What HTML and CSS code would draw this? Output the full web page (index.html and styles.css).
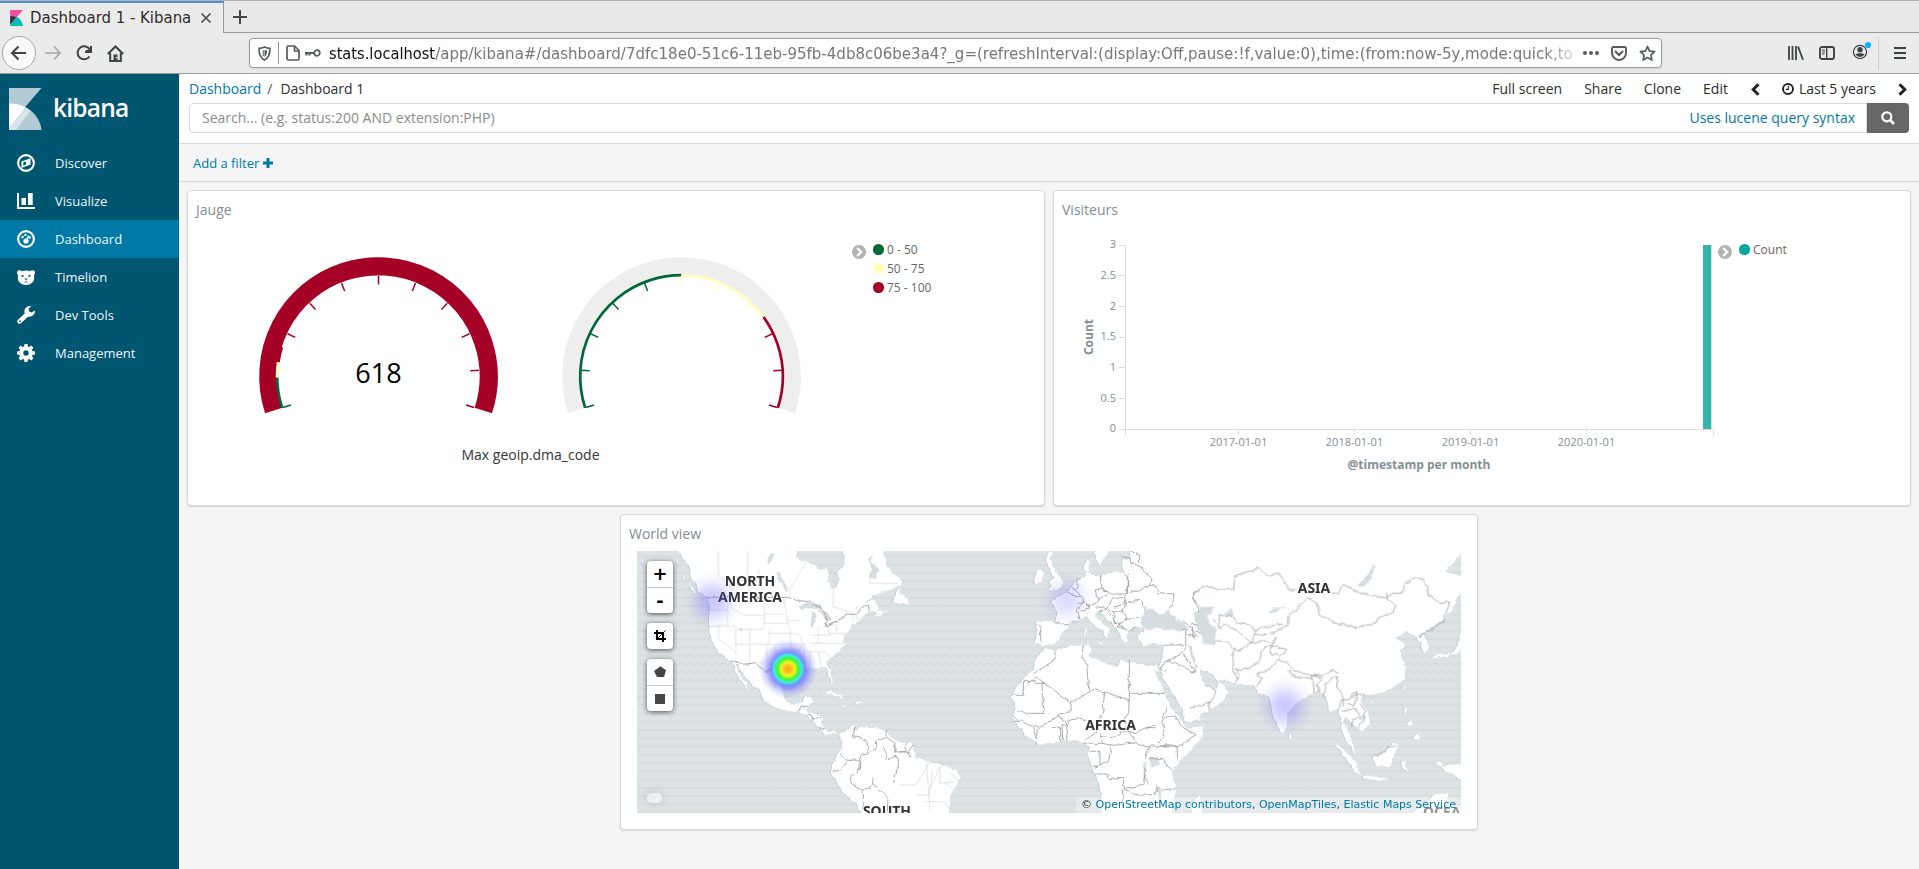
FILE: index.html
```html
<!DOCTYPE html>
<html lang="en">
<head>
<meta charset="utf-8">
<title>Dashboard 1 - Kibana</title>
<link rel="stylesheet" href="styles.css">
</head>
<body>
<div class="tabstrip">
  <div class="tab">
    <svg class="favicon" width="13" height="16" viewBox="0 0 32 40"><path fill="#f04e98" d="M0 0h32L0 37z"/><path fill="#343741" d="M0 15v22l16-19C11 16 5 15 0 15z"/><path fill="#00bfb3" d="M17 17L0 37v3h32c-1-10-7-18-15-23z"/></svg>
    <span class="tab-title">Dashboard 1 - Kibana</span>
    <svg class="tab-close" width="12" height="12" viewBox="0 0 12 12"><path d="M1.500 1.500l9 9m0-9l-9 9" stroke="#4a4f52" stroke-width="1.700"/></svg>
  </div>
  <svg class="newtab" width="16" height="16" viewBox="0 0 16 16"><path d="M8 1v14M1 8h14" stroke="#3f4447" stroke-width="2"/></svg>
</div>
<div class="toolbar">
  <div class="back"><svg width="18" height="16" viewBox="0 0 18 16"><path d="M8.500 1.500L2 8l6.500 6.500M2 8h14" fill="none" stroke="#3e4346" stroke-width="2"/></svg></div>
  <svg class="forward" width="18" height="16" viewBox="0 0 18 16"><path d="M10 1.500L16 8l-6 6.500M16 8H1" fill="none" stroke="#a5a7a8" stroke-width="1.700"/></svg>
  <svg class="reload" width="16" height="16" viewBox="0 0 16 16"><path d="M14 5A6.500 6.500 0 1 0 13.500 11.500" fill="none" stroke="#3e4346" stroke-width="2"/><path d="M15 1v6H9M14.500 6L10 6" fill="none" stroke="#3e4346" stroke-width="2"/></svg>
  <svg class="home" width="17" height="17" viewBox="0 0 17 17"><path d="M.8 9L8.500 1.500 16.200 9M3.200 8v8h10.600V8" fill="none" stroke="#3e4346" stroke-width="2"/><path d="M6.500 9.500h4V16h-4z" fill="#3e4346"/><circle cx="9.400" cy="12.700" r=".8" fill="#ebebeb"/></svg>
  <div class="urlbar">
    <svg class="shield" width="13" height="15" viewBox="0 0 13 15"><path d="M6.500 1c2 1 3.500 1.300 5.500 1.300C12 8 11 12 6.500 14 2 12 1 8 1 2.300 3 2.300 4.500 2 6.500 1z" fill="none" stroke="#555a5d" stroke-width="1.700"/><path d="M6.500 4v7C8.500 9.500 9 7 9 4.500z" fill="#555a5d"/><path d="M5.300 4.200v6" stroke="#555a5d"/></svg>
    <span class="url-sep"></span>
    <svg class="page-icon" width="14" height="16" viewBox="0 0 14 16"><path d="M2.500 1h6L13 5.500v8a1.500 1.500 0 0 1-1.500 1.500h-9A1.500 1.500 0 0 1 1 13.500v-11A1.500 1.500 0 0 1 2.500 1zM8.500 1v5H13" fill="none" stroke="#555a5d" stroke-width="1.700"/></svg>
    <svg class="key-icon" width="16" height="8" viewBox="0 0 16 8"><path d="M0 4h9M1.500 4v2.500M4.500 4v2.500" stroke="#555a5d" stroke-width="2"/><circle cx="12" cy="4" r="2.800" fill="none" stroke="#555a5d" stroke-width="1.700"/></svg>
    <div class="url"><span class="host">stats.localhost</span>/app/kibana#/dashboard/7dfc18e0-51c6-11eb-95fb-4db8c06be3a4?_g=(refreshInterval:(display:Off,pause:!f,value:0),time:(from:now-5y,mode:quick,to</div>
    <svg class="dots" width="16" height="4" viewBox="0 0 16 4"><g fill="#555a5d"><circle cx="2" cy="2" r="2"/><circle cx="8" cy="2" r="2"/><circle cx="14" cy="2" r="2"/></g></svg>
    <svg class="pocket" width="16" height="15" viewBox="0 0 16 15"><path d="M2.500 1h11A1.500 1.500 0 0 1 15 2.500V7A7 7 0 0 1 1 7V2.500A1.500 1.500 0 0 1 2.500 1z" fill="none" stroke="#555a5d" stroke-width="1.900"/><path d="M4.500 5.500L8 9l3.500-3.500" fill="none" stroke="#555a5d" stroke-width="2" stroke-linecap="round"/></svg>
    <svg class="star" width="17" height="17" viewBox="0 0 17 17"><path d="M8.500 1.500l2.100 4.600 5 .6-3.700 3.400 1 5-4.400-2.500-4.400 2.500 1-5L1.400 6.700l5-.6z" fill="none" stroke="#555a5d" stroke-width="1.700" stroke-linejoin="round"/></svg>
  </div>
  <div class="tools">
    <svg width="16" height="14" viewBox="0 0 16 14"><path d="M1 0v14M4.500 0v14M8 0v14M10 .5L15 13.800" stroke="#3e4346" stroke-width="1.800"/></svg>
    <svg width="16" height="14" viewBox="0 0 16 14"><rect x="1" y="1" width="14" height="12" rx="2" fill="none" stroke="#3e4346" stroke-width="1.900"/><path d="M7.700 1v12" stroke="#3e4346" stroke-width="1.400"/><path d="M3 4h3M3 6h3M3 8h2.500" stroke="#3e4346"/></svg>
    <svg class="account" width="20" height="20" viewBox="0 0 20 20"><circle cx="8" cy="11" r="6.600" fill="none" stroke="#3e4346" stroke-width="1.200"/><circle cx="8" cy="8.800" r="2.700" fill="#3e4346"/><path d="M3.500 13.500c2-1.800 7-1.800 9 0A5.500 5.500 0 0 1 8 16a5.500 5.500 0 0 1-4.500-2.500z" fill="#3e4346"/><circle cx="16" cy="4" r="3.100" fill="#0ab2fb"/></svg>
    <span class="tool-sep"></span>
    <svg width="12" height="12" viewBox="0 0 12 12"><path d="M0 1h12M0 6h12M0 11h12" stroke="#3e4346" stroke-width="2"/></svg>
  </div>
</div>

<div class="app">
  <nav class="sidebar">
    <div class="logo">
      <svg width="33" height="42" viewBox="0 0 33 42"><path fill="#b2cbd4" d="M0 0h32.500L0 38z"/><path fill="#b2cbd4" d="M17 19.500L3 42h29.500C31.500 32 25.500 24 17 19.500z"/><path fill="#fff" d="M0 15.500c6 0 12 1.400 17 4L0 41z"/><path fill="#d9e5e9" d="M17 19.500L0 39v3h7L21.500 23z"/></svg>
      <span class="wordmark">kibana</span>
    </div>
    <a class="nav-item"><svg width="18" height="18" viewBox="0 0 18 18"><circle cx="9" cy="9" r="7.900" fill="none" stroke="#fff" stroke-width="2.100"/><path fill="#fff" fill-rule="evenodd" d="M13.600 4.200v6.300l-9.200 3.400V7.600zM9 7.200v3.300l-2.700 1.200V8.500z"/></svg><span>Discover</span></a>
    <a class="nav-item"><svg width="18" height="16" viewBox="0 0 18 16"><path fill="#fff" d="M0 0h2v14h16v2H0zM4.500 5H9v7H4.500zM11 0h4.700v12H11z"/></svg><span>Visualize</span></a>
    <a class="nav-item active"><svg width="18" height="18" viewBox="0 0 18 18"><circle cx="9" cy="9" r="7.900" fill="none" stroke="#fff" stroke-width="2.100"/><g fill="#fff"><circle cx="5.600" cy="7" r="1.200"/><circle cx="8.400" cy="4.900" r="1.200"/><circle cx="12.700" cy="7.500" r="1.200"/><circle cx="9" cy="11" r="2.600"/></g><path d="M9 11l2.800-5.500" stroke="#fff" stroke-width="1.500"/></svg><span>Dashboard</span></a>
    <a class="nav-item"><svg width="18" height="15" viewBox="0 0 18 15"><path fill="#fff" d="M0 1.500C2-.3 4 .4 5 1.200c2.500-1 5.500-1 8 0 1-.8 3-1.500 5 .3.200 1.700-.4 3-1 3.700.3 2 .3 4.500-.8 6.300C14.500 14 11.500 15 9 15s-5.500-1-7.200-3.500C.7 9.700.7 7.200 1 5.200.4 4.500-.2 3.200 0 1.500z"/><path fill="#005571" d="M4.300 5l2.700.6-.8 1.500-1.700-.6zM13.700 5l-2.700.6.8 1.500 1.700-.6zM7.300 8.600h3.400L9 10.300zM6.500 12.300L9 11.200l2.500 1.100z"/></svg><span>Timelion</span></a>
    <a class="nav-item"><svg width="18" height="18" viewBox="0 0 18 18"><path d="M2.600 15.400L10.500 8" stroke="#fff" stroke-width="4.600" stroke-linecap="round"/><path fill="#fff" d="M14.500.4A5.400 5.400 0 0 0 7.600 7l3.600 3.600A5.400 5.400 0 0 0 17.800 4.600l-3.300 1.900-2.700-1.300-.1-3z"/><circle cx="2.900" cy="15.100" r=".9" fill="#005571"/></svg><span>Dev Tools</span></a>
    <a class="nav-item"><svg width="18" height="18" viewBox="-9 -9 18 18"><circle r="4.700" fill="none" stroke="#fff" stroke-width="4"/><g fill="#fff"><path id="tooth" d="M-2-6l.5-3h3l.5 3z"/><use href="#tooth" transform="rotate(45)"/><use href="#tooth" transform="rotate(90)"/><use href="#tooth" transform="rotate(135)"/><use href="#tooth" transform="rotate(180)"/><use href="#tooth" transform="rotate(225)"/><use href="#tooth" transform="rotate(270)"/><use href="#tooth" transform="rotate(315)"/></g></svg><span>Management</span></a>
  </nav>

  <main class="main">
    <header class="topnav">
      <div class="menu-row">
        <div class="crumbs"><a>Dashboard</a><i>/</i><span>Dashboard 1</span></div>
        <div class="menu">
          <span>Full screen</span><span>Share</span><span>Clone</span><span>Edit</span>
          <svg class="chev-left" width="9" height="13" viewBox="0 0 9 13"><path d="M7.500 1.200L2.200 6.500l5.300 5.300" fill="none" stroke="#222" stroke-width="3"/></svg>
          <span class="time"><svg width="12" height="12" viewBox="0 0 12 12"><circle cx="6" cy="6" r="5" fill="none" stroke="#222" stroke-width="1.900"/><path d="M6.400 3v3.400H3.800" fill="none" stroke="#222" stroke-width="1.100"/></svg>Last 5 years</span>
          <svg class="chev-right" width="9" height="13" viewBox="0 0 9 13"><path d="M1.500 1.200l5.300 5.300-5.300 5.300" fill="none" stroke="#222" stroke-width="3"/></svg>
        </div>
      </div>
      <div class="search">
        <div class="search-box"><span class="placeholder">Search... (e.g. status:200 AND extension:PHP)</span><a>Uses lucene query syntax</a></div>
        <div class="search-btn"><svg width="14" height="14" viewBox="0 0 14 14"><circle cx="5.800" cy="5.800" r="4.500" fill="none" stroke="#fff" stroke-width="2.200"/><path d="M9 9l4 4" stroke="#fff" stroke-width="2.600"/></svg></div>
      </div>
    </header>
    <div class="filterbar"><a>Add a filter</a><svg width="10" height="10" viewBox="0 0 10 10"><path d="M5 0v10M0 5h10" stroke="#0079a5" stroke-width="3"/></svg></div>

    <div class="grid">
      <div class="row">
        <section class="panel">
          <h2>Jauge</h2>
          <div class="viz">
            <svg class="plot" width="664" height="278" viewBox="188 227 664 278">
              <defs><path id="tick" d="M92 0h8.500" fill="none" stroke-width="1.500"/></defs>
              <g transform="translate(378.500 376.500)" fill="none">
                <g transform="rotate(162)">
                  <circle r="110.200" stroke="#a50026" stroke-width="18.200" pathLength="360" stroke-dasharray="216 144"/>
                  <circle r="101.300" stroke="#006837" stroke-width="2.600" pathLength="360" stroke-dasharray="17.500 342.500"/>
                  <circle r="101.300" stroke="#ffffbe" stroke-width="3" pathLength="360" stroke-dasharray="0 17.500 8.700 333.800"/>
                  <circle r="101" stroke="#a50026" stroke-width="2.600" pathLength="360" stroke-dasharray="0 26.200 8.700 325.100"/>
                  <use href="#tick" stroke="#006837"/>
                  <use href="#tick" stroke="#ffffbe" transform="rotate(21.600)"/>
                  <g stroke="#a50026">
                    <use href="#tick" transform="rotate(43.200)"/><use href="#tick" transform="rotate(64.800)"/><use href="#tick" transform="rotate(86.400)"/><use href="#tick" transform="rotate(108)"/><use href="#tick" transform="rotate(129.600)"/><use href="#tick" transform="rotate(151.200)"/><use href="#tick" transform="rotate(172.800)"/><use href="#tick" transform="rotate(194.400)"/><use href="#tick" transform="rotate(216)"/>
                  </g>
                </g>
                <text class="gauge-value" x="0" y="6">618</text>
              </g>
              <g transform="translate(681.500 376.500)" fill="none">
                <g transform="rotate(162)">
                  <circle r="110.200" stroke="#eee" stroke-width="18.200" pathLength="360" stroke-dasharray="216 144"/>
                  <circle r="101.300" stroke="#006837" stroke-width="2.700" pathLength="360" stroke-dasharray="108 252"/>
                  <circle r="101.300" stroke="#ffffbe" stroke-width="2.700" pathLength="360" stroke-dasharray="0 108 54 198"/>
                  <circle r="101.300" stroke="#a50026" stroke-width="2.700" pathLength="360" stroke-dasharray="0 162 54 144"/>
                  <g stroke="#006837"><use href="#tick"/><use href="#tick" transform="rotate(21.600)"/><use href="#tick" transform="rotate(43.200)"/><use href="#tick" transform="rotate(64.800)"/><use href="#tick" transform="rotate(86.400)"/></g>
                  <g stroke="#ffffbe"><use href="#tick" transform="rotate(108)"/><use href="#tick" transform="rotate(129.600)"/><use href="#tick" transform="rotate(151.200)"/></g>
                  <g stroke="#a50026"><use href="#tick" transform="rotate(172.800)"/><use href="#tick" transform="rotate(194.400)"/><use href="#tick" transform="rotate(216)"/></g>
                </g>
              </g>
              <text class="gauge-label" x="530.500" y="459.500">Max geoip.dma_code</text>
            </svg>
            <svg class="toggle" width="14" height="14" viewBox="0 0 14 14"><circle cx="7" cy="7" r="7" fill="#b2b2b2"/><path d="M5.200 3l4 4-4 4" fill="none" stroke="#fff" stroke-width="2.300"/></svg>
            <ul class="legend"><li><b class="dot green"></b>0 - 50</li><li><b class="dot yellow"></b>50 - 75</li><li><b class="dot red"></b>75 - 100</li></ul>
          </div>
        </section>
        <section class="panel">
          <h2>Visiteurs</h2>
          <div class="viz">
            <svg class="plot" width="664" height="278" viewBox="1054 227 664 278">
              <path d="M1119 245.500h6.500v183.500M1119 275.500h6M1119 306.500h6M1119 337.500h6M1119 367.500h6M1119 398.500h6M1119 429.500h594.500v6M1125.500 429v6M1238.500 429v6M1354.500 429v6M1470.500 429v6M1586.500 429v6" fill="none" stroke="#ddd"/>
              <path fill="#34b5aa" d="M1703 245h8v184h-8z"/>
              <path fill="#c3e8e5" d="M1711 245h1v184h-1z"/>
              <g class="ylabels"><text x="1116" y="248">3</text><text x="1116" y="279">2.5</text><text x="1116" y="310">2</text><text x="1116" y="340">1.5</text><text x="1116" y="371">1</text><text x="1116" y="402">0.5</text><text x="1116" y="432">0</text></g>
              <g class="xlabels"><text x="1238.500" y="446">2017-01-01</text><text x="1354.500" y="446">2018-01-01</text><text x="1470.500" y="446">2019-01-01</text><text x="1586.500" y="446">2020-01-01</text></g>
              <text class="axis-title" x="1419" y="469">@timestamp per month</text>
              <text class="axis-title" transform="translate(1093 337) rotate(-90)">Count</text>
            </svg>
            <svg class="toggle" width="14" height="14" viewBox="0 0 14 14"><circle cx="7" cy="7" r="7" fill="#b2b2b2"/><path d="M5.200 3l4 4-4 4" fill="none" stroke="#fff" stroke-width="2.300"/></svg>
            <ul class="legend"><li><b class="dot teal"></b>Count</li></ul>
          </div>
        </section>
      </div>
      <div class="row centered">
        <section class="panel">
          <h2>World view</h2>
          <div class="map">
            <svg width="824" height="262" viewBox="0 0 824 262">
              <defs>
                <pattern id="waves" width="8.260" height="8.260" patternUnits="userSpaceOnUse" patternTransform="translate(0 1)"><path d="M-1 5.500C1 5.500 2 3.800 4.100 3.800S7.200 5.500 9.300 5.500" fill="none" stroke="#d2d9dc" stroke-width="1.300"/></pattern>
                <filter id="rough" x="-2%" y="-2%" width="104%" height="104%" color-interpolation-filters="sRGB"><feTurbulence type="fractalNoise" baseFrequency=".16" numOctaves="2" seed="4"/><feDisplacementMap in="SourceGraphic" scale="4" xChannelSelector="R" yChannelSelector="G"/></filter>
                <radialGradient id="hot"><stop offset="0" stop-color="#ffa81e"/><stop offset=".13" stop-color="#ffc020"/><stop offset=".22" stop-color="#f5f02c"/><stop offset=".28" stop-color="#b0fa20"/><stop offset=".36" stop-color="#3cf53c"/><stop offset=".44" stop-color="#40f0b8"/><stop offset=".5" stop-color="#48d8fa"/><stop offset=".56" stop-color="#6480fa" stop-opacity=".85"/><stop offset=".66" stop-color="#6868fa" stop-opacity=".6"/><stop offset=".8" stop-color="#7070ff" stop-opacity=".28"/><stop offset="1" stop-color="#7878ff" stop-opacity="0"/></radialGradient>
                <radialGradient id="cool"><stop offset="0" stop-color="#5a50ff" stop-opacity=".34"/><stop offset=".35" stop-color="#5a50ff" stop-opacity=".25"/><stop offset=".7" stop-color="#5a50ff" stop-opacity=".08"/><stop offset="1" stop-color="#5a50ff" stop-opacity="0"/></radialGradient>
              </defs>
              <rect width="824" height="262" fill="#dde3e5"/>
              <rect width="824" height="262" fill="url(#waves)"/>

              <!-- Coastlines -->
              <g class="land">
                <g transform="translate(-27 -41) scale(.33333)">
                  <path d="M180 110L210 127 232 165 240 182 243 205 262 232 268 246 290 262 300 290 296 340 305 390 325 425 355 447 362 450 375 480 385 500 392 510 404 525 413 542 408 520 393 502 384 480 375 460 385 465 400 495 425 520 450 545 462 570 490 590 530 603 550 605 567 600 568 608 590 618 612 633 628 655 645 675 660 672 680 670 690 682 698 710 680 737 668 765 662 790 680 815 705 855 740 885 760 930 1012 930 1016 905 1020 880 1025 845 1045 820 1052 800 1045 782 1025 775 995 767 975 758 935 750 918 745 905 700 870 697 862 693 840 680 830 665 800 655 775 655 750 650 738 662 730 655 738 645 718 653 700 665 690 672 675 665 655 665 640 655 632 640 637 615 615 612 600 607 590 598 607 575 605 560 585 562 580 578 555 585 530 575 520 555 515 530 520 510 540 490 570 480 595 472 610 478 640 470 652 475 655 500 665 520 669 515 662 490 652 455 660 445 690 420 703 405 700 385 718 362 722 348 740 338 760 322 775 306 795 304 800 312 790 320 812 315 838 298 820 305 803 302 797 270 780 270 752 287 790 257 820 247 850 235 872 220 870 205 850 190 830 165 825 145 820 110 690 110 703 145 700 170 678 185 685 210 680 232 667 234 655 210 650 178 620 176 590 152 560 145 557 110z"/>
                  <path d="M852 262L872 232 870 255 893 262 898 287 875 277 850 277zM630 548L660 542 708 566 690 565 655 550zM733 573L765 579 740 585zM690 585l18 2-8 4zM218 192l6 10-4 8zM240 230l8 0 12 18-8-2z"/>
                </g>
                <g transform="translate(263 -41) scale(.33333)">
                  <path d="M437 415L465 422 500 410 550 405 568 403 575 420 568 435 580 447 610 457 640 472 655 468 660 453 690 455 740 468 768 463 778 482 770 490 758 478 775 505 790 535 800 560 810 590 835 620 850 640 858 655 880 655 914 648 900 690 870 725 845 745 830 765 815 785 825 830 825 855 810 930 605 930 603 860 597 820 585 790 575 770 565 740 567 710 550 700 525 690 480 695 440 700 415 705 385 680 350 645 337 625 345 600 345 580 335 560 350 530 375 500 400 480 405 450 425 425z"/>
                  <path d="M408 335L440 332 467 335 473 305 450 270 480 262 500 245 515 232 528 212 545 200 560 197 553 170 560 145 569 150 562 190 580 195 600 195 640 187 672 188 665 165 668 150 690 145 692 110 900 110 900 630 857 637 850 605 830 570 800 520 782 487 780 465 790 430 790 405 760 400 730 406 712 390 713 375 735 362 728 350 715 350 690 362 680 375 686 395 672 402 662 385 650 355 630 335 612 318 598 303 583 308 592 328 630 360 625 368 618 386 608 362 590 350 572 335 558 318 540 330 515 330 505 345 497 355 480 380 470 400 440 405 430 410 405 400 412 360z"/>
                  <path d="M440 130L455 123 450 145 465 180 490 215 485 232 465 238 442 243 455 228 447 215 460 205 450 175 437 150zM402 205l14-24 14 6-4 28-20 9zM583 110l4 40 14 16 8-22 14-8v-26zM590 396l18 2-2 6zM555 355l4 0 0 22-5 0zM-10 200l14 15-8 10zM-8 255l28 7 8 23-18-7-20 2z"/>
                </g>
                <g transform="translate(553 -41) scale(.33333)">
                  <path d="M-5 110H830V118L765 185 830 200 830 215 800 265 785 300 760 330 725 350 700 375 712 400 715 420 700 430 690 395 670 375 655 370 650 363 615 385 645 403 630 425 640 450 648 475 640 510 600 540 560 552 530 555 510 560 515 580 535 610 540 640 515 665 490 645 466 620 458 640 478 670 490 705 497 735 475 700 458 670 455 630 445 595 420 605 410 570 395 545 355 555 320 580 293 605 290 650 275 672 250 620 238 560 205 548 190 522 140 522 110 512 80 510 60 485 20 475 45 525 80 535 90 515 117 545 100 570 60 600 -5 630z"/>
                  <path d="M432 700L460 715 500 760 512 795 495 785 470 750zM517 795l43 5 40 12-40 0-40-7zM545 738l35-8 30-35 14 10-14 35-8 31-43-3zM633 755l20-5-10 15 14 22-20-14zM642 588l10 8-8 20zM668 685l18-15 1 20zM735 758l15-4 8 18 30-12 35 5v55l-35-28-32-18zM645 930l70-60 20-18 40-2-5 25 60 30v25zM297 665l8 18-8 6zM722 445l20-10 40-4 20-20 14-50 14-10v55l-20 18-36 14-40 6zM540 573l10 0-4 10zM640 530l6-6-4 22zM650 640l14-10 4 14-10 4zM30 855l6 75-34 0 0-45z"/>
                </g>
              </g>

              <!-- Inland water -->
              <g class="water" filter="url(#rough)">
                <g transform="translate(-27 -41) scale(.33333)">
                  <path d="M565 290l30-14 30 6 15 12-25 4-20-4-20 6zM606 308l8-4 3 14-8 34-8-2zM625 302l18-2 24 20-8 16-10-2zM640 352l40-18 2 6-34 14zM682 330l24-12 0 6-20 10zM497 190l12 0 24 46-4 8-20-30zM472 150l8-18 10-4-4 24-12 12zM387 352l10 2 2 8-8 0zM775 145l14-8-6 20 24 24-10 30-20-10 8-22z"/>
                </g>
                <g transform="translate(263 -41) scale(.33333)">
                  <path d="M722 345L725 320 738 298 760 300 785 315 812 290 808 310 845 335 868 357 845 364 800 360 770 352 740 358zM748 745l28-6 2 24-24 6zM733 757l8 2-4 50 14 12-8 4-14-20zM770 830l12 0 4 60-12-22z"/>
                </g>
                <g transform="translate(553 -41) scale(.33333)">
                  <path d="M10 310L30 292 70 290 65 312 50 315 60 340 80 360 75 380 78 403 45 405 30 370 20 340zM105 308l20-10 6 22-18-4zM238 310l12-18 42 0-32 8-14 12zM497 228l13-10 25-25 10-24 8 0-6 34-24 26z"/>
                </g>
              </g>

              <!-- National borders -->
              <g class="borders" filter="url(#rough)">
                <g transform="translate(-27 -41) scale(.33333)">
                  <path d="M290 262H540L565 272 600 275 640 300 650 330 645 350 680 335 710 313 740 313 757 290 775 285 778 305M362 450L400 463 440 458 465 485 480 476 500 505 520 515M568 600l5-10 20 0M590 618l10-6M600 612l10 18 26-14M628 655l14 0M735 650l-5 30 40 10 6 42 22-18-2-20 30-10 4-25M776 732l-24 3 0 40-32 30 6 20 30 15 30-8 4-30M690 735l20 12 40 5 0 25M668 785l24-5 18-30M760 840l0 60M790 825l44 35-2 45M820 710l12 40 24-12 10 20-15 60M858 697l0 28M888 697v28M830 680l24 20 0 26 36 0 14 16"/>
                </g>
                <g transform="translate(263 -41) scale(.33333)">
                  <path d="M0 725h25l15-22M467 335l40 10M413 345l14 8-6 20 2 25-4 8M500 245l22 12 24 8 2 14-16 20 8 30M515 232l16 10 0-28 10-10M545 262l-14-18M534 280l22-2 10 16-24 8M600 195l6 40M606 240l30 12 44 0 5-64M585 240l22-6 18 20-30 14zM560 290l30-10 10-14M590 290l30 6 16-28 36-6M622 296l20 10 30-8 6-30M600 305l22-4 30 40-20-5M640 305l6 30 28 22M665 300l15 26-30 25M680 328l40-8M650 350l40 12 20-12M680 252l-10 30-30 10M685 275l38-4 14 30M672 188l10 10 0 52 30-10 40-14 4-18-34-38-30-10 0-14-24-6M692 123l26 14 0 28M752 226l20 4 4 18 46 4-4 34-10 6M845 362l12 0 0 42-66 2M850 335l24 16 12 34-12-8-16-8M874 340l20 6M860 404l-20 30-44 20-14 26M850 430l34 54M810 452l70 34M790 460l20-8M800 480l-14 6M900 245l-20 2 4 30 14 30M886 360l14 10M465 422l0 28-66 42M408 500l104 78 70-40 30 8 76 24V450M550 405l-4 34 14 25 6 74M692 550h104M340 556h30V514h36V500M406 520h28l-8 0 6 90h-50l-30-10M512 578l2 26-34 8-24 20-38 20-20-8M614 546l-6 60-10 20M688 570l-2 36-14 20 8 30M470 612l30 32-14 0 2 48M454 652h28l0 44M500 690l4-60 40-5 14 8M600 640l-16 30-30 22M412 655l-4 48M340 634l28 0 30 16 10 34M340 618l14 14M602 675l36 8 40-22 28 10 30-18 34 0M552 700l54 0-4-30M606 700l36 6 66-8 40 14-14 34M680 660l30 36M744 708h84l2 44M770 710l34-6 30 6 54-36-40-22-28-34-26 4-6 16 6 40-18 22M800 592l-14 32M778 640l-40 16M735 746l54 0 24 36M570 724h30l0 40-22 6M635 712l-10 40-40 20M585 792l36 0 4 14 44-4 4 36 58-16M668 840v55M730 822l8-50M764 855l8-30M784 840l40-4M668 840l50 16 40-2 20-20"/>
                </g>
                <g transform="translate(553 -41) scale(.33333)">
                  <path d="M28 290L10 270 14 245 50 225 84 240 130 238 136 196 205 175 235 200 265 188 298 238 320 240M355 262L316 300 295 316 292 345 240 374M425 250l20 0 12-28 60 30 70 12 18-14 30 0 12-32 30-16 24 8 18 46 30 24 30-4-20 60-50 30-20 12M355 262l28 20 4 30 32 16 12 10 70 14 58-14 4-14 50-18 4-20-24-16-4-22M70 330l18 26 14-14 40 20 44 38 36-10 30 10 4-20M88 356V312l36 6 20 20 36 4 14 24 24-14 60-10M186 400l4-28 40 4M78 392l34 2 20 24 16 4 36-26M130 420l0 60 14 30M150 420l0-6M134 478l40 0 34-26 12-40 30-8M140 480l10 16-14 22M200 530l16-24-14-16 40-14 24-28M240 430l30 8 20-20-46-10zM266 450l20 4 30 28 46 14 30 0 36-14 18 10M296 480l10 16 60 14-2-14 34 8M370 512l2 36 14-4-4-22 14-14M400 560l10-40 20-20 14 0-4 30 20 30 0 30M445 595l10-26 20 0 30-20 22 12M480 560l20-16 0 20-8 22-18-6M455 600l40-4 20 30-30 0 0 26M510 580l14 20-4 30-20 24M550 738l30-8 14-20 24 0M0 484l20 0M45 525l36 15-20 38-60 16M62 600l-8-22M0 410l10 40 12 26M0 350l24 30M0 372l20 6M690 380l14-8"/>
                </g>
              </g>

              <!-- State and province lines -->
              <g class="states">
                <g transform="translate(-27 -41) scale(.33333)">
                  <path d="M325 123V195L370 240M413 123V262M445 180l16 82M540 262V237L590 155M670 230v60l60 20M298 300h54v-38M352 300v48M325 348h52v85M325 348v38l50 40M296 348h30M377 403H585M403 315h60v43h-86M403 315l-38-20-10-30M463 262v50h65M419 358v102M463 340h68M478 358v45M478 370h64M470 403v55h-30M495 410v25l45 5 5 40M540 370l6 65M522 262l8 55 12 54M530 332h40M545 370l25 4 8 30-24 38M545 420h30M585 403l-12 80M600 420v50M625 425l8 45M585 425h60l35 35M600 400h105M600 375l60 0M625 350v50M655 350l5 30M660 370h50l8-10M680 335v30M730 315v20M740 290v40M780 185v35h85"/>
                </g>
                <g transform="translate(263 -41) scale(.33333)">
                  <path d="M0 825H48L90 755M48 855h40l10-70M80 762l10 140M90 835l30-65M75 875l60 0 10 20M120 770v50l50-5M150 790l24 20M135 820l30 20M410 498l-50 50M400 490l65-40"/>
                </g>
              </g>

              <g class="places">
                <text x="113" y="34.500">NORTH</text><text x="113" y="51.300">AMERICA</text>
                <text x="473.500" y="179">AFRICA</text><text x="677" y="42">ASIA</text>
                <text x="250" y="264.500">SOUTH</text><text x="786" y="265.500" class="faded">OCEANIA</text>
              </g>
              <circle cx="151" cy="118" r="29.500" fill="url(#hot)"/>
              <circle cx="75" cy="50" r="29" fill="url(#cool)"/>
              <circle cx="430" cy="48" r="28" fill="url(#cool)" opacity=".65"/>
              <circle cx="648" cy="155" r="29" fill="url(#cool)"/>
            </svg>
            <div class="controls">
              <div class="ctl"><span>+</span><span>-</span></div>
              <div class="ctl"><span><svg width="12" height="12" viewBox="0 0 12 12"><path d="M3 0v9h9M0 3h9v9" fill="none" stroke="#000" stroke-width="1.900"/><path d="M3.500 8.500L11.500.5" stroke="#000" stroke-width=".8"/></svg></span></div>
              <div class="ctl"><span><svg width="12" height="12" viewBox="0 0 12 12"><path d="M6.500.2L12 4.300 10 11H3L0 5z" fill="#464646"/></svg></span><span><svg width="10" height="10" viewBox="0 0 10 10"><path d="M0 0h10v10H0z" fill="#464646"/></svg></span></div>
            </div>
            <div class="map-legend"></div>
            <div class="attribution">© <a>OpenStreetMap contributors</a>, <a>OpenMapTiles</a>, <a>Elastic Maps Service</a></div>
          </div>
        </section>
      </div>
    </div>
  </main>
</div>
</body>
</html>
```
FILE: styles.css
```css
* { box-sizing: border-box; }
html, body { height: 100%; }
body {
  margin: 0;
  display: flex;
  flex-direction: column;
  overflow: hidden;
  font: 14px/20px "Open Sans", "Noto Sans", sans-serif;
  color: #2d2d2d;
  background: #f5f5f5;
}
svg { display: block; flex: none; }
a { color: #0079a5; }

/* Browser window */
.tabstrip {
  height: 33px;
  flex: none;
  display: flex;
  align-items: center;
  background: #e8e8e8;
  border-top: 1px solid #b7b3af;
  border-bottom: 1px solid #999;
  font-family: "DejaVu Sans Condensed", "DejaVu Sans", sans-serif;
}
.tab {
  width: 224px;
  height: 32px;
  align-self: flex-start;
  display: flex;
  align-items: center;
  padding: 0 0 1px 10px;
  background: #ebebeb;
  border-top: 2px solid #4a90d9;
  border-right: 1px solid #999;
}
.tab-title { margin-left: 7px; width: 170px; font-size: 16.6px; font-stretch: condensed; white-space: nowrap; }
.newtab { margin-left: 8px; }
.toolbar {
  height: 41px;
  flex: none;
  display: flex;
  align-items: center;
  padding-left: 2px;
  background: #ebebeb;
  border-bottom: 1px solid #999;
}
.back {
  width: 34px;
  height: 34px;
  display: flex;
  align-items: center;
  justify-content: center;
  border: 1px solid #a6a6a6;
  border-radius: 50%;
  background: #fafafa;
}
.forward { margin-left: 8px; }
.reload { margin-left: 14px; }
.home { margin-left: 15px; }
.urlbar {
  width: 1413px;
  height: 30px;
  margin-left: 125px;
  padding-left: 8px;
  display: flex;
  align-items: center;
  border: 1px solid #999;
  border-radius: 4px;
  background: #fff;
  box-shadow: 0 1px 3px rgba(0, 0, 0, .1);
}
.url-sep { width: 1px; height: 22px; margin: 0 7px 0 7px; background: #999; }
.key-icon { margin-left: 5px; }
.url {
  width: 1247px;
  margin-left: 8px;
  overflow: hidden;
  white-space: nowrap;
  font: condensed 16.7px/24px "DejaVu Sans Condensed", "DejaVu Sans", sans-serif;
  color: #777;
  -webkit-mask-image: linear-gradient(to right, #000 1215px, transparent 1255px);
  mask-image: linear-gradient(to right, #000 1215px, transparent 1255px);
}
.host { color: #0c0c0d; font-size: 16.3px; }
.dots { margin-left: 7px; }
.pocket { margin-left: 12px; }
.star { margin-left: 12px; }
.tools { display: flex; align-items: center; margin-left: 126px; }
.tools svg + svg { margin-left: 15px; }
.tools .account { margin: 0 0 4px 17px; }
.tool-sep { width: 1px; height: 33px; margin: 0 15px 0 6px; background: #cfcfcf; }

/* Application */
.app { flex: 1; display: flex; min-height: 0; }
.sidebar { width: 179px; flex: none; background: #005571; }
.logo { height: 70px; display: flex; align-items: center; padding-left: 9px; }
.wordmark {
  margin: 0 0 3px 11px;
  font: 600 24.5px/30px "Open Sans", "Noto Sans", sans-serif;
  letter-spacing: -.8px;
  color: #fff;
}
.nav-item {
  height: 38px;
  display: flex;
  align-items: center;
  gap: 20px;
  padding-left: 17px;
  font-size: 13px;
  color: #eef5f7;
}
.nav-item.active { background: #0079a5; }
.main { flex: 1; min-width: 0; }
.topnav { height: 70px; padding-left: 10px; background: #fff; border-bottom: 1px solid #d9d9d9; }
.menu-row { height: 29px; display: flex; align-items: center; justify-content: space-between; padding-top: 1px; }
.crumbs { display: flex; }
.crumbs i { margin: 0 8px 0 6px; font-style: normal; color: #555; }
.menu { display: flex; align-items: center; padding-right: 12px; }
.menu > span + span { margin-left: 22px; }
.chev-left { margin: 0 0 0 23px; }
.menu .time { display: flex; align-items: center; gap: 5px; margin: 0 22px 0 22px; }
.search { height: 30px; display: flex; margin-right: 10px; }
.search-box {
  flex: 1;
  display: flex;
  align-items: center;
  justify-content: space-between;
  padding: 0 11px 0 12px;
  border: 1px solid #d9d9d9;
  border-radius: 4px 0 0 4px;
}
.placeholder { color: #8c8c8c; }
.search-btn { width: 42px; display: flex; align-items: center; justify-content: center; background: #666; border-radius: 0 4px 4px 0; }
.filterbar {
  height: 38px;
  display: flex;
  align-items: center;
  gap: 4px;
  padding-left: 14px;
  font-size: 13px;
  border-bottom: 1px solid #d9d9d9;
}
.grid { padding: 8px; display: flex; flex-direction: column; gap: 8px; }
.row { display: flex; gap: 8px; }
.row.centered { padding-left: 433px; }
.panel {
  width: 858px;
  height: 316px;
  flex: none;
  background: #fff;
  border: 1px solid #d9d9d9;
  border-radius: 4px;
  box-shadow: 0 1px 2px rgba(0, 0, 0, .13);
}
.panel h2 { margin: 0; height: 36px; padding: 9px 0 0 8px; font-size: 14px; font-weight: 400; line-height: 20px; color: #848e96; }
.viz { display: flex; }
.toggle { margin: 18px 0 0 0; }
.legend { margin: 13px 0 0 7px; padding: 0; list-style: none; font-size: 12px; line-height: 19px; color: #666; }
.legend li { display: flex; align-items: center; gap: 3.5px; }
.dot { width: 10.5px; height: 10.5px; border-radius: 50%; }
.green { background: #006837; }
.yellow { background: #ffffbe; }
.red { background: #a50026; }
.teal { background: #00a69b; }

.plot text { font-family: "Open Sans", "Noto Sans", sans-serif; text-anchor: middle; }
.gauge-value { font-size: 27px; fill: #000; }
.gauge-label { font-size: 14px; fill: #333; }
.plot .ylabels text { font-size: 11px; fill: #848e96; text-anchor: end; }
.xlabels text { font-size: 11px; fill: #848e96; }
.axis-title { font-size: 12px; font-weight: 700; fill: #848e96; }

/* Map */
.map { position: relative; width: 824px; height: 262px; margin-left: 16px; overflow: hidden; }
.land { fill: #fff; filter: url(#rough) drop-shadow(-1px .7px 0 #c3ced2); }
.water { fill: #d5dde0; }
.borders { fill: none; stroke: #8e8e8e; stroke-width: 2.2; }
.states { fill: none; stroke: #b8b8b8; stroke-width: 1.6; stroke-dasharray: 5 2; }
.places text {
  font: 700 14px "Noto Sans", sans-serif;
  fill: #333;
  stroke: rgba(255, 255, 255, .7);
  stroke-width: 2px;
  paint-order: stroke;
  text-anchor: middle;
}
.places .faded { fill: #666; text-anchor: start; }
.controls { position: absolute; left: 10px; top: 10px; display: flex; flex-direction: column; gap: 10px; }
.ctl { width: 26px; border-radius: 4px; background: #fff; box-shadow: 0 1px 5px rgba(0, 0, 0, .65); }
.ctl span {
  height: 26px;
  display: flex;
  align-items: center;
  justify-content: center;
  font: 700 18px/26px "DejaVu Sans", sans-serif;
  color: #000;
}
.ctl span + span { border-top: 1px solid #ccc; }
.map-legend {
  position: absolute;
  left: 10px;
  bottom: 10px;
  width: 15px;
  height: 10px;
  border-radius: 5px;
  background: rgba(255, 255, 255, .5);
  box-shadow: 0 0 10px rgba(0, 0, 0, .15);
}
.attribution {
  position: absolute;
  right: 0;
  bottom: 0;
  padding: 0 5px;
  font: 11px/16px "DejaVu Sans", sans-serif;
  color: #333;
  background: rgba(255, 255, 255, .3);
}
```
